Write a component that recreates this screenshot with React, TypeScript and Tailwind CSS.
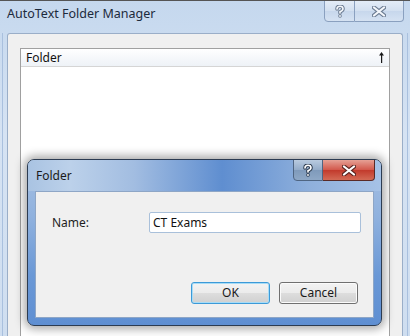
import React from "react";

const font = { fontFamily: '"Noto Sans", "Open Sans", Arial, sans-serif' };

const CloseGlyph = ({ stroke, fill }: { stroke: string; fill: string }) => (
  <svg width="14" height="11" viewBox="0 0 14 11">
    <path d="M2 1.5 L12 9.5 M12 1.5 L2 9.5" stroke={stroke} strokeWidth="4.2" strokeLinecap="round" />
    <path d="M2 1.5 L12 9.5 M12 1.5 L2 9.5" stroke={fill} strokeWidth="2.2" strokeLinecap="round" />
  </svg>
);

const HelpGlyph = ({ stroke, fill }: { stroke: string; fill: string }) => (
  <svg width="10" height="13" viewBox="0 0 10 13">
    <path d="M2 4 Q2 1.2 5 1.2 Q8 1.2 8 3.8 Q8 5.6 5 6.8 L5 8" fill="none" stroke={stroke} strokeWidth="3.6" strokeLinecap="round" />
    <circle cx="5" cy="11" r="1.8" fill={stroke} />
    <path d="M2 4 Q2 1.2 5 1.2 Q8 1.2 8 3.8 Q8 5.6 5 6.8 L5 8" fill="none" stroke={fill} strokeWidth="1.6" strokeLinecap="round" />
    <circle cx="5" cy="11" r="0.9" fill={fill} />
  </svg>
);

const SortArrow = () => (
  <svg width="5" height="11" viewBox="0 0 5 11">
    <path d="M2.5 0 L5 3.5 L0 3.5 Z" fill="#1a1a1a" />
    <rect x="2" y="3" width="1.2" height="8" fill="#1a1a1a" />
  </svg>
);

const FolderDialog = () => (
  <div className="absolute left-[27px] top-[158px] w-[355px] h-[167px] rounded-[7px] border border-[#2c3c52] shadow-[0_0_10px_3px_rgba(0,0,0,0.35)] bg-[linear-gradient(180deg,#a6c0e2_0%,#8fb1de_35%,#6a98d6_70%,#5f8fd2_100%)] flex flex-col overflow-hidden">
    {/* title */}
    <div className="h-[31px] relative flex items-center pl-[8px] shrink-0 bg-[linear-gradient(90deg,#a9c3e2_0%,#bcd1ea_12%,#a2bde1_30%,#5f8ed0_55%,#8fb0dc_80%,#a6c2e6_100%)]">
      <span className="text-[12px] text-[#1a1a1a]" style={font}>Folder</span>
      <div className="absolute right-[6px] top-[-1px] flex">
        <div className="w-[30px] h-[22px] rounded-bl-[4px] border border-[#4f6582] bg-[linear-gradient(180deg,#b9cbe0_0%,#93abc8_50%,#7f9abb_51%,#8ea8c6_100%)] flex items-center justify-center">
          <HelpGlyph stroke="#2f3e52" fill="#ffffff" />
        </div>
        <div className="w-[52px] h-[22px] rounded-br-[4px] border border-l-0 border-[#5a2a26] bg-[linear-gradient(180deg,#e6a195_0%,#d2574a_50%,#c23a2c_51%,#d36a55_100%)] flex items-center justify-center">
          <CloseGlyph stroke="#5a2420" fill="#ffffff" />
        </div>
      </div>
    </div>
    {/* client */}
    <div className="mx-[7px] mb-[7px] flex-1 bg-[#f0f0f0] border border-[#8ea6c6] flex flex-col" style={font}>
      <div className="flex items-center mt-[20px]">
        <span className="w-[113px] pl-[16px] text-[12px] text-[#1e1e1e]">Name:</span>
        <div className="w-[212px] h-[21px] bg-white border border-[#a9c0da] rounded-[2px] flex items-center px-[3px] text-[12px] text-[#111]">
          CT Exams
        </div>
      </div>
      <div className="mt-auto mb-[13px] mr-[15px] flex justify-end gap-[9px]">
        <button className="w-[79px] h-[22px] rounded-[3px] border border-[#3c9ad8] shadow-[inset_0_0_0_1px_#a8dcf6] bg-[linear-gradient(180deg,#f3f3f3_0%,#ebebeb_50%,#dddddd_51%,#d0d0d0_100%)] text-[12px] text-[#1a1a1a]">
          OK
        </button>
        <button className="w-[79px] h-[22px] rounded-[3px] border border-[#707070] shadow-[inset_0_0_0_1px_#fbfbfb] bg-[linear-gradient(180deg,#f3f3f3_0%,#ebebeb_50%,#dddddd_51%,#d0d0d0_100%)] text-[12px] text-[#1a1a1a]">
          Cancel
        </button>
      </div>
    </div>
  </div>
);

export default function App() {
  return (
    <div className="relative w-[410px] h-[336px] overflow-hidden bg-[linear-gradient(180deg,#c5d8ee_0%,#d6e3f3_40%,#cfdef0_100%)] border-t border-[#555]" style={font}>
      {/* side frame lines */}
      <div className="absolute left-[2px] top-[32px] bottom-0 w-[1px] bg-[#a9c0de]" />
      <div className="absolute right-[2px] top-[32px] bottom-0 w-[1px] bg-[#a9c0de]" />
      {/* title bar */}
      <div className="h-[31px] relative flex items-center pl-[7px]">
        <span className="text-[12.5px] text-[#1c2a3c] -mt-[4px]">AutoText Folder Manager</span>
        <div className="absolute right-[6px] top-[-1px] flex">
          <div className="w-[31px] h-[22px] rounded-bl-[4px] border border-[#8aa0bf] bg-[linear-gradient(180deg,#e3ecf7_0%,#d3e0f0_50%,#c7d7ec_51%,#d5e2f2_100%)] flex items-center justify-center">
            <HelpGlyph stroke="#6c7c92" fill="#f4f7fb" />
          </div>
          <div className="w-[49px] h-[22px] rounded-br-[4px] border border-l-0 border-[#8aa0bf] bg-[linear-gradient(180deg,#e3ecf7_0%,#d3e0f0_50%,#c7d7ec_51%,#d5e2f2_100%)] flex items-center justify-center">
            <CloseGlyph stroke="#6c7c92" fill="#f4f7fb" />
          </div>
        </div>
      </div>
      {/* client area */}
      <div className="absolute left-[7px] right-[7px] top-[32px] bottom-0 rounded-tl-[3px] rounded-tr-[3px] border border-b-0 border-[#9aaec8] bg-[#f0f0f0] pl-[12px] pr-[12px] pt-[14px] flex flex-col">
        <div className="flex-1 border border-b-0 border-[#a0a0a0] bg-white flex flex-col">
          <div className="h-[18px] flex items-center justify-between px-[5px] border-b border-[#d5d5d5] bg-[linear-gradient(180deg,#ffffff_0%,#f6f8fb_50%,#eef2f7_100%)]">
            <span className="text-[12px] text-[#111]">Folder</span>
            <SortArrow />
          </div>
        </div>
      </div>
      <FolderDialog />
    </div>
  );
}
